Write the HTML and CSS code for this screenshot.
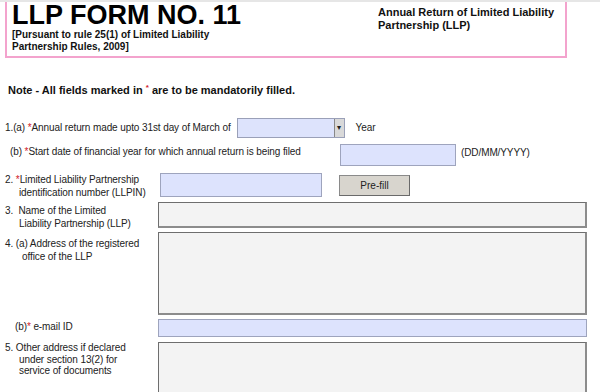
FILE: index.html
```html
<!DOCTYPE html>
<html>
<head>
	<meta name="viewport" content="width=device-width, initial-scale=1.0">
	<link rel="stylesheet" href="styles.css">
	<title>LLP Form 11</title>
</head>
<body>
	<div class="topbar"></div>
	<div class="header">
		<div class="title-block">
			<h1>LLP FORM NO. 11</h1>
			<p class="rule">[Pursuant to rule 25(1) of Limited Liability<br>Partnership Rules, 2009]</p>
		</div>
		<p class="form-name">Annual Return of Limited Liability<br>Partnership (LLP)</p>
	</div>

	<p class="note">Note - All fields marked in <span class="req sup">*</span> are to be mandatorily filled.</p>

	<div class="form">
		<div class="row row-1a">
			<span class="text">1.(a) <span class="req">*</span>Annual return made upto 31st day of March of</span>
			<div class="select"><span class="arrow">&#9662;</span></div>
			<span class="text">Year</span>
		</div>

		<div class="row row-1b">
			<span class="text sub">(b) <span class="req">*</span>Start date of financial year for which annual return is being filed</span>
			<div class="field blue date"></div>
			<span class="text">(DD/MM/YYYY)</span>
		</div>

		<div class="row row-2">
			<div class="label">2. <span class="req">*</span>Limited Liability Partnership<br>identification number (LLPIN)</div>
			<div class="field blue llpin"></div>
			<button class="btn">Pre-fill</button>
		</div>

		<div class="row row-3">
			<div class="label">3.&nbsp; Name of the Limited<br>Liability Partnership (LLP)</div>
			<div class="field grey wide"></div>
		</div>

		<div class="row row-4">
			<div class="label">4. (a) Address of the registered<br><span class="deep">office of the LLP</span></div>
			<div class="field grey wide tall"></div>
		</div>

		<div class="row row-4b">
			<div class="label"><span class="sub2">(b)<span class="req">*</span> e-mail ID</span></div>
			<div class="field blue wide email"></div>
		</div>

		<div class="row row-5">
			<div class="label">5. Other address if declared<br>under section 13(2) for<br>service of documents</div>
			<div class="field grey wide tall"></div>
		</div>
	</div>
</body>
</html>
```

FILE: styles.css
```css
*{
	margin: 0;
	padding: 0;
	box-sizing: border-box;
}
body{
	font-family: "Liberation Sans", Arial, sans-serif;
	font-size: 10px;
	color: #222;
	background: #fff;
	overflow: hidden;
}
.topbar{
	height: 2px;
	background: #e6e6e6;
}
.header{
	display: flex;
	justify-content: space-between;
	margin-left: 5px;
	width: 562px;
	height: 56px;
	border: 2px solid #f3a3cd;
	border-top: 0;
	padding: 1px 7px 0 5px;
}
.header h1{
	font-size: 27px;
	font-weight: 700;
	color: #000;
	line-height: 24px;
}
.rule{
	font-size: 10px;
	font-weight: 700;
	line-height: 12px;
	margin-top: 2px;
	color: #111;
}
.form-name{
	font-size: 11px;
	font-weight: 700;
	line-height: 13px;
	color: #111;
	width: 180px;
	margin-top: 3px;
}
.note{
	font-size: 11px;
	font-weight: 700;
	margin: 26px 0 0 8px;
	color: #111;
}
.req{
	color: #d0202a;
}
.sup{
	position: relative;
	top: -4px;
	font-size: 8px;
}
.form{
	padding-left: 5px;
	padding-right: 13px;
	letter-spacing: -0.1px;
}
.row{
	display: flex;
	align-items: flex-start;
}
.text{
	line-height: 20px;
}
.row-1a{
	margin-top: 22px;
	height: 20px;
	align-items: center;
}
.select{
	width: 108px;
	height: 20px;
	margin: 0 11px 0 6px;
	background: #dde3fc;
	border: 1px solid #9aa0b8;
	display: flex;
	justify-content: flex-end;
}
.arrow{
	width: 10px;
	height: 18px;
	background: #d9d9d9;
	border-left: 1px solid #888;
	font-size: 8px;
	line-height: 18px;
	text-align: center;
	color: #222;
}
.row-1b{
	margin-top: 6px;
	height: 22px;
}
.row-1b .text{
	line-height: 16px;
}
.sub{
	padding-left: 5px;
	width: 335px;
}
.field{
	border: 1px solid #8a8a8a;
}
.blue{
	background: #dde3fd;
	border-color: #9ea4bd;
}
.grey{
	background: #f3f3f3;
	border: 1px solid #7a7a7a;
	border-bottom-width: 2px;
	border-right-width: 2px;
	border-color: #6e6e6e #8c8c8c #8c8c8c #6e6e6e;
}
.date{
	width: 116px;
	height: 22px;
}
.row-1b .text:last-child{
	margin-left: 5px;
	line-height: 18px;
}
.label{
	width: 153px;
	flex: none;
	line-height: 13px;
	padding-left: 14px;
	text-indent: -14px;
}
.deep{
	padding-left: 3px;
}
.row-2{
	margin-top: 7px;
	height: 24px;
}
.llpin{
	width: 162px;
	height: 24px;
	margin-left: 2px;
}
.btn{
	width: 71px;
	height: 21px;
	margin: 2px 0 0 17px;
	font-family: "Liberation Sans", Arial, sans-serif;
	font-size: 10px;
	color: #222;
	background: #d8d5ce;
	border: 1px solid #8a8a8a;
	border-bottom-color: #6a6a6a;
	border-right-color: #6a6a6a;
}
.row-3{
	margin-top: 5px;
}
.row-3 .label{
	padding-top: 2px;
}
.wide{
	flex: 1;
	height: 26px;
}
.row-4{
	margin-top: 2px;
}
.row-4 .label{
	padding-top: 5px;
}
.tall{
	height: 83px;
}
.row-4b{
	margin-top: 4px;
}
.row-4b .label{
	padding-top: 1px;
}
.sub2{
	padding-left: 10px;
}
.email{
	height: 18px;
}
.row-5{
	margin-top: 5px;
}
.row-5 .label{
	line-height: 11.5px;
	padding-top: 0;
}
```
